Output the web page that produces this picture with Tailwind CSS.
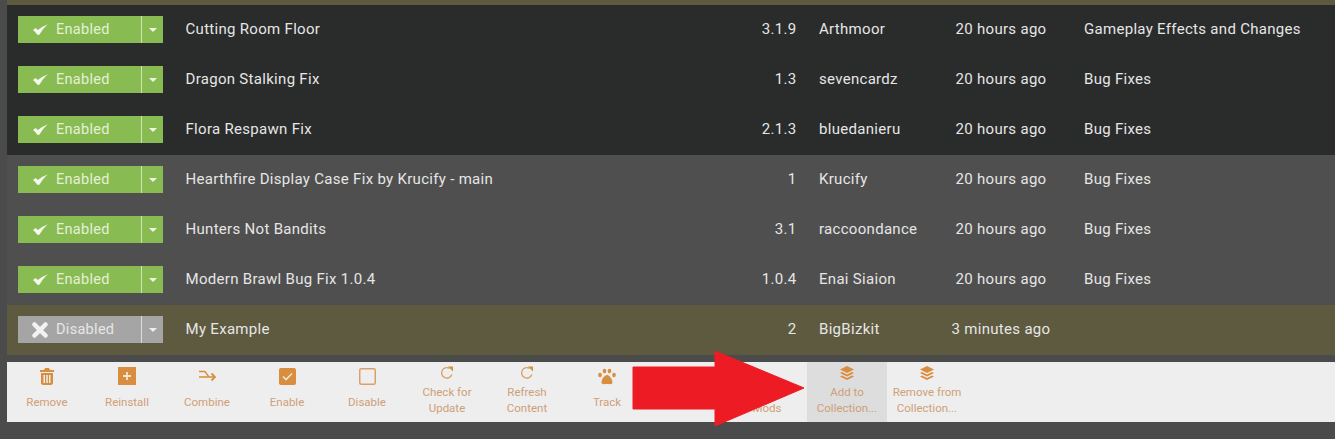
<!DOCTYPE html>
<html lang="en">
<head>
  <meta charset="UTF-8">
  <title>Mod Manager</title>
  <script src="https://cdn.jsdelivr.net/npm/@tailwindcss/browser@4"></script>
</head>
<body class="bg-[#4b4b4b] font-['Roboto',sans-serif] overflow-hidden">
  <div class="relative w-[1335px] h-[439px] overflow-hidden">

    <!-- Mod table -->
    <div class="ml-[7px]">
      <div class="h-[5px] bg-[#5e5a40]"></div>

      <div class="flex items-center h-[50px] pl-[11px] pb-[1px] bg-[#2a2b2b] text-[15px] tracking-[0.3px] text-[#e6e6e6]">
        <div class="flex w-[145px] h-[27px] bg-[#89bb53] text-[#e4f0d6] text-[14.5px]">
          <div class="flex items-center flex-1 pl-[15px] gap-[8px]">
            <svg class="w-[15px] h-[11px]" viewBox="0 0 14 10"><path d="M0 5.500 L2.500 3.500 L4.500 5.500 Q8.500 2 14 0 Q9.500 3.500 6 10 L4 10 Q2.500 7.500 0 5.500Z" fill="#f4f8ee"/></svg>
            <span>Enabled</span>
          </div>
          <div class="flex items-center justify-center w-[22px] border-l border-[#cfe3b4]">
            <div class="w-0 h-0 border-x-[4px] border-x-transparent border-t-[4px] border-t-[#f0f6e6]"></div>
          </div>
        </div>
        <div class="w-[22.5px]"></div>
        <div class="w-[550px]">Cutting Room Floor</div>
        <div class="w-[61px] text-right">3.1.9</div>
        <div class="w-[22.5px]"></div>
        <div class="w-[114px]">Arthmoor</div>
        <div class="w-[151px] pr-[15px] text-center">20 hours ago</div>
        <div>Gameplay Effects and Changes</div>
      </div>

      <div class="flex items-center h-[50px] pl-[11px] pb-[1px] bg-[#2a2b2b] text-[15px] tracking-[0.3px] text-[#e6e6e6]">
        <div class="flex w-[145px] h-[27px] bg-[#89bb53] text-[#e4f0d6] text-[14.5px]">
          <div class="flex items-center flex-1 pl-[15px] gap-[8px]">
            <svg class="w-[15px] h-[11px]" viewBox="0 0 14 10"><path d="M0 5.500 L2.500 3.500 L4.500 5.500 Q8.500 2 14 0 Q9.500 3.500 6 10 L4 10 Q2.500 7.500 0 5.500Z" fill="#f4f8ee"/></svg>
            <span>Enabled</span>
          </div>
          <div class="flex items-center justify-center w-[22px] border-l border-[#cfe3b4]">
            <div class="w-0 h-0 border-x-[4px] border-x-transparent border-t-[4px] border-t-[#f0f6e6]"></div>
          </div>
        </div>
        <div class="w-[22.5px]"></div>
        <div class="w-[550px]">Dragon Stalking Fix</div>
        <div class="w-[61px] text-right">1.3</div>
        <div class="w-[22.5px]"></div>
        <div class="w-[114px]">sevencardz</div>
        <div class="w-[151px] pr-[15px] text-center">20 hours ago</div>
        <div>Bug Fixes</div>
      </div>

      <div class="flex items-center h-[50px] pl-[11px] pb-[1px] bg-[#2a2b2b] text-[15px] tracking-[0.3px] text-[#e6e6e6]">
        <div class="flex w-[145px] h-[27px] bg-[#89bb53] text-[#e4f0d6] text-[14.5px]">
          <div class="flex items-center flex-1 pl-[15px] gap-[8px]">
            <svg class="w-[15px] h-[11px]" viewBox="0 0 14 10"><path d="M0 5.500 L2.500 3.500 L4.500 5.500 Q8.500 2 14 0 Q9.500 3.500 6 10 L4 10 Q2.500 7.500 0 5.500Z" fill="#f4f8ee"/></svg>
            <span>Enabled</span>
          </div>
          <div class="flex items-center justify-center w-[22px] border-l border-[#cfe3b4]">
            <div class="w-0 h-0 border-x-[4px] border-x-transparent border-t-[4px] border-t-[#f0f6e6]"></div>
          </div>
        </div>
        <div class="w-[22.5px]"></div>
        <div class="w-[550px]">Flora Respawn Fix</div>
        <div class="w-[61px] text-right">2.1.3</div>
        <div class="w-[22.5px]"></div>
        <div class="w-[114px]">bluedanieru</div>
        <div class="w-[151px] pr-[15px] text-center">20 hours ago</div>
        <div>Bug Fixes</div>
      </div>

      <div class="flex items-center h-[50px] pl-[11px] pb-[1px] bg-[#4f4f4f] text-[15px] tracking-[0.3px] text-[#e6e6e6]">
        <div class="flex w-[145px] h-[27px] bg-[#89bb53] text-[#e4f0d6] text-[14.5px]">
          <div class="flex items-center flex-1 pl-[15px] gap-[8px]">
            <svg class="w-[15px] h-[11px]" viewBox="0 0 14 10"><path d="M0 5.500 L2.500 3.500 L4.500 5.500 Q8.500 2 14 0 Q9.500 3.500 6 10 L4 10 Q2.500 7.500 0 5.500Z" fill="#f4f8ee"/></svg>
            <span>Enabled</span>
          </div>
          <div class="flex items-center justify-center w-[22px] border-l border-[#cfe3b4]">
            <div class="w-0 h-0 border-x-[4px] border-x-transparent border-t-[4px] border-t-[#f0f6e6]"></div>
          </div>
        </div>
        <div class="w-[22.5px]"></div>
        <div class="w-[550px]">Hearthfire Display Case Fix by Krucify - main</div>
        <div class="w-[61px] text-right">1</div>
        <div class="w-[22.5px]"></div>
        <div class="w-[114px]">Krucify</div>
        <div class="w-[151px] pr-[15px] text-center">20 hours ago</div>
        <div>Bug Fixes</div>
      </div>

      <div class="flex items-center h-[50px] pl-[11px] pb-[1px] bg-[#4f4f4f] text-[15px] tracking-[0.3px] text-[#e6e6e6]">
        <div class="flex w-[145px] h-[27px] bg-[#89bb53] text-[#e4f0d6] text-[14.5px]">
          <div class="flex items-center flex-1 pl-[15px] gap-[8px]">
            <svg class="w-[15px] h-[11px]" viewBox="0 0 14 10"><path d="M0 5.500 L2.500 3.500 L4.500 5.500 Q8.500 2 14 0 Q9.500 3.500 6 10 L4 10 Q2.500 7.500 0 5.500Z" fill="#f4f8ee"/></svg>
            <span>Enabled</span>
          </div>
          <div class="flex items-center justify-center w-[22px] border-l border-[#cfe3b4]">
            <div class="w-0 h-0 border-x-[4px] border-x-transparent border-t-[4px] border-t-[#f0f6e6]"></div>
          </div>
        </div>
        <div class="w-[22.5px]"></div>
        <div class="w-[550px]">Hunters Not Bandits</div>
        <div class="w-[61px] text-right">3.1</div>
        <div class="w-[22.5px]"></div>
        <div class="w-[114px]">raccoondance</div>
        <div class="w-[151px] pr-[15px] text-center">20 hours ago</div>
        <div>Bug Fixes</div>
      </div>

      <div class="flex items-center h-[50px] pl-[11px] pb-[1px] bg-[#4f4f4f] text-[15px] tracking-[0.3px] text-[#e6e6e6]">
        <div class="flex w-[145px] h-[27px] bg-[#89bb53] text-[#e4f0d6] text-[14.5px]">
          <div class="flex items-center flex-1 pl-[15px] gap-[8px]">
            <svg class="w-[15px] h-[11px]" viewBox="0 0 14 10"><path d="M0 5.500 L2.500 3.500 L4.500 5.500 Q8.500 2 14 0 Q9.500 3.500 6 10 L4 10 Q2.500 7.500 0 5.500Z" fill="#f4f8ee"/></svg>
            <span>Enabled</span>
          </div>
          <div class="flex items-center justify-center w-[22px] border-l border-[#cfe3b4]">
            <div class="w-0 h-0 border-x-[4px] border-x-transparent border-t-[4px] border-t-[#f0f6e6]"></div>
          </div>
        </div>
        <div class="w-[22.5px]"></div>
        <div class="w-[550px]">Modern Brawl Bug Fix 1.0.4</div>
        <div class="w-[61px] text-right">1.0.4</div>
        <div class="w-[22.5px]"></div>
        <div class="w-[114px]">Enai Siaion</div>
        <div class="w-[151px] pr-[15px] text-center">20 hours ago</div>
        <div>Bug Fixes</div>
      </div>

      <div class="flex items-center h-[50px] pl-[11px] pb-[1px] bg-[#5e5a40] text-[15px] tracking-[0.3px] text-[#e6e6e6]">
        <div class="flex w-[145px] h-[27px] bg-[#a5a5a5] text-[#e6e6e6] text-[14.5px]">
          <div class="flex items-center flex-1 pl-[14px] gap-[8px]">
            <svg class="w-[16px] h-[16px]" viewBox="0 0 16 16"><path d="M2.500 2.500 L13.500 13.500 M13.500 2.500 L2.500 13.500" stroke="#f2f2f2" stroke-width="4.500" stroke-linecap="round"/></svg>
            <span>Disabled</span>
          </div>
          <div class="flex items-center justify-center w-[22px] border-l border-[#dddddd]">
            <div class="w-0 h-0 border-x-[4px] border-x-transparent border-t-[4px] border-t-[#efefef]"></div>
          </div>
        </div>
        <div class="w-[22.5px]"></div>
        <div class="w-[550px]">My Example</div>
        <div class="w-[61px] text-right">2</div>
        <div class="w-[22.5px]"></div>
        <div class="w-[114px]">BigBizkit</div>
        <div class="w-[151px] pr-[15px] text-center">3 minutes ago</div>
        <div></div>
      </div>
    </div>

    <!-- Toolbar -->
    <div class="flex h-[60px] mt-[7px] ml-[7px] bg-[#eeeeee] text-[11.5px] leading-[16px] text-[#cf9f78]">
      <div class="flex flex-col items-center w-[80px] pt-[4px]">
        <div class="flex items-center justify-center h-[20px]">
          <svg class="w-[14px] h-[17px]" viewBox="0 0 14 17" fill="#d98d3e"><path d="M5 0h4l1 2h4v2H0V2h4z"/><path fill-rule="evenodd" d="M1 5h12v10.500L11.500 17h-9L1 15.500zM3.500 7v8h1.500V7zM6.300 7v8h1.500V7zM9 7v8h1.500V7z"/></svg>
        </div>
        <div class="mt-[8px]">Remove</div>
      </div>
      <div class="flex flex-col items-center w-[80px] pt-[4px]">
        <div class="flex items-center justify-center h-[20px]">
          <svg class="w-[18px] h-[18px]" viewBox="0 0 18 18"><rect width="18" height="18" fill="#d98d3e"/><path d="M9 5v8M5 9h8" stroke="#f6e6d4" stroke-width="1.800"/></svg>
        </div>
        <div class="mt-[8px]">Reinstall</div>
      </div>
      <div class="flex flex-col items-center w-[80px] pt-[4px]">
        <div class="flex items-center justify-center h-[20px]">
          <svg class="w-[18px] h-[12px]" viewBox="0 0 18 12" fill="none" stroke="#d98d3e" stroke-width="1.400"><path d="M1 1.500h6l4 5.500H1M11 7h5"/><path d="M13.500 3.500L17 7l-3.500 3.500" stroke-width="1.800"/></svg>
        </div>
        <div class="mt-[8px]">Combine</div>
      </div>
      <div class="flex flex-col items-center w-[80px] pt-[4px]">
        <div class="flex items-center justify-center h-[20px]">
          <svg class="w-[17px] h-[17px]" viewBox="0 0 17 17"><rect width="17" height="17" rx="2" fill="#d98d3e"/><path d="M4 8.500l3 3 6-6" fill="none" stroke="#f6e6d4" stroke-width="1.600"/></svg>
        </div>
        <div class="mt-[8px]">Enable</div>
      </div>
      <div class="flex flex-col items-center w-[80px] pt-[4px]">
        <div class="flex items-center justify-center h-[20px]">
          <svg class="w-[17px] h-[17px]" viewBox="0 0 17 17"><rect x="0.750" y="0.750" width="15.500" height="15.500" rx="1.500" fill="none" stroke="#d9a06a" stroke-width="1.500"/></svg>
        </div>
        <div class="mt-[8px]">Disable</div>
      </div>
      <div class="flex flex-col items-center w-[80px] pt-[4px] text-center">
        <div class="flex items-center justify-center h-[14px]">
          <svg class="w-[14px] h-[14px]" viewBox="0 0 14 14" fill="none"><path d="M11.800 8.500A5.200 5.200 0 1 1 9.500 2.400" stroke="#d9a06a" stroke-width="1.300"/><path d="M8 0.500L13 0.500L13 5.500Z" fill="#d98d3e"/></svg>
        </div>
        <div class="mt-[4px]">Check for<br>Update</div>
      </div>
      <div class="flex flex-col items-center w-[80px] pt-[4px] text-center">
        <div class="flex items-center justify-center h-[14px]">
          <svg class="w-[14px] h-[14px]" viewBox="0 0 14 14" fill="none"><path d="M11.800 8.500A5.200 5.200 0 1 1 9.500 2.400" stroke="#d9a06a" stroke-width="1.300"/><path d="M8 0.500L13 0.500L13 5.500Z" fill="#d98d3e"/></svg>
        </div>
        <div class="mt-[4px]">Refresh<br>Content</div>
      </div>
      <div class="flex flex-col items-center w-[80px] pt-[4px]">
        <div class="flex items-center justify-center h-[20px]">
          <svg class="w-[18px] h-[17px]" viewBox="0 0 18 17" fill="#d98d3e"><ellipse cx="6.500" cy="3" rx="1.800" ry="2.300"/><ellipse cx="11.500" cy="3" rx="1.800" ry="2.300"/><ellipse cx="2" cy="7" rx="1.800" ry="2.200"/><ellipse cx="16" cy="7" rx="1.800" ry="2.200"/><path d="M9 7c2.500 0 5.500 4.500 5.500 7.500 0 2.300-3 1.500-5.500 1.500s-5.500.8-5.500-1.500C3.500 11.500 6.500 7 9 7z"/></svg>
        </div>
        <div class="mt-[8px]">Track</div>
      </div>
      <div class="w-[80px]"></div>
      <div class="flex flex-col items-center w-[80px] pt-[4px] text-center">
        <div class="h-[14px]"></div>
        <div class="mt-[4px]">Manage<br>Mods</div>
      </div>
      <div class="flex flex-col items-center w-[80px] pt-[4px] text-center bg-[#dddddd]">
        <div class="flex items-center justify-center h-[14px]">
          <svg class="w-[14px] h-[14px]" viewBox="0 0 14 14" fill="#d98d3e"><path d="M7 0l7 3.500-7 3.500-7-3.500z"/><path d="M2 6l5 2.500L12 6l2 1-7 3.500L0 7z"/><path d="M2 9.500l5 2.500 5-2.500 2 1L7 14l-7-3.500z"/></svg>
        </div>
        <div class="mt-[4px]">Add to<br>Collection...</div>
      </div>
      <div class="flex flex-col items-center w-[80px] pt-[4px] text-center">
        <div class="flex items-center justify-center h-[14px]">
          <svg class="w-[14px] h-[14px]" viewBox="0 0 14 14" fill="#d98d3e"><path d="M7 0l7 3.500-7 3.500-7-3.500z"/><path d="M2 6l5 2.500L12 6l2 1-7 3.500L0 7z"/><path d="M2 9.500l5 2.500 5-2.500 2 1L7 14l-7-3.500z"/></svg>
        </div>
        <div class="mt-[4px]">Remove from<br>Collection...</div>
      </div>
    </div>

    <!-- Red annotation arrow over the toolbar -->
    <svg class="absolute left-[632px] top-[350px] w-[175px] h-[78px]" viewBox="0 0 175 78" fill="#ed1c24"><path d="M1 17h82V1L172 38 83 76V59H1z" stroke="#ed1c24" stroke-width="1" stroke-linejoin="round"/></svg>
  </div>
</body>
</html>
